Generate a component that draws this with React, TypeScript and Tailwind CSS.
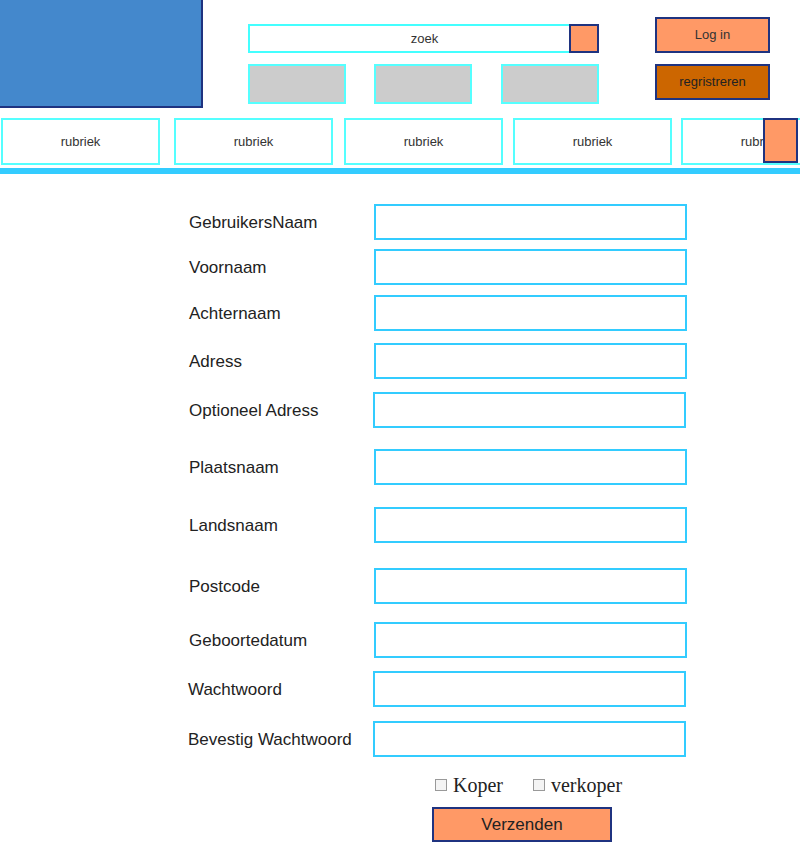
const fields: { label: string; mt: string; pl: string; lw: string }[] = [
  { label: 'GebruikersNaam', mt: 'mt-[30px]', pl: 'pl-[189px]', lw: 'w-[185px]' },
  { label: 'Voornaam', mt: 'mt-[9px]', pl: 'pl-[189px]', lw: 'w-[185px]' },
  { label: 'Achternaam', mt: 'mt-[10px]', pl: 'pl-[189px]', lw: 'w-[185px]' },
  { label: 'Adress', mt: 'mt-[12px]', pl: 'pl-[189px]', lw: 'w-[185px]' },
  { label: 'Optioneel Adress', mt: 'mt-[13px]', pl: 'pl-[189px]', lw: 'w-[184px]' },
  { label: 'Plaatsnaam', mt: 'mt-[21px]', pl: 'pl-[189px]', lw: 'w-[185px]' },
  { label: 'Landsnaam', mt: 'mt-[22px]', pl: 'pl-[189px]', lw: 'w-[185px]' },
  { label: 'Postcode', mt: 'mt-[25px]', pl: 'pl-[189px]', lw: 'w-[185px]' },
  { label: 'Geboortedatum', mt: 'mt-[18px]', pl: 'pl-[189px]', lw: 'w-[185px]' },
  { label: 'Wachtwoord', mt: 'mt-[13px]', pl: 'pl-[188px]', lw: 'w-[185px]' },
  { label: 'Bevestig Wachtwoord', mt: 'mt-[14px]', pl: 'pl-[188px]', lw: 'w-[185px]' },
];

const rubrieken = ['ml-[1px]', 'ml-[14px]', 'ml-[11px]', 'ml-[10px]', 'ml-[9px]'];

function Header() {
  return (
    <div className="relative">
      <div className="flex h-[118px]">
        <div className="w-[203px] h-[108px] bg-[#4488cc] border-r-2 border-b-2 border-[#1f3380] shrink-0" />
        <div className="ml-[45px] mt-[24px] flex flex-col">
          <div className="flex w-[351px] h-[29px]">
            <div className="flex-1 border-2 border-r-0 border-[#44ffff] flex items-center justify-center pl-[30px] text-[13px] text-[#333]">
              zoek
            </div>
            <button className="w-[30px] h-[29px] bg-[#ff9966] border-2 border-[#1f3380]" />
          </div>
          <div className="flex mt-[11px]">
            <div className="w-[98px] h-[40px] bg-[#cccccc] border-2 border-[#55ffff]" />
            <div className="w-[98px] h-[40px] bg-[#cccccc] border-2 border-[#55ffff] ml-[28px]" />
            <div className="w-[98px] h-[40px] bg-[#cccccc] border-2 border-[#55ffff] ml-[29px]" />
          </div>
        </div>
        <div className="ml-[56px] mt-[17px] flex flex-col">
          <button className="w-[115px] h-[36px] bg-[#ff9966] border-2 border-[#1f3380] text-[13px] text-[#333]">
            Log in
          </button>
          <button className="w-[115px] h-[36px] mt-[11px] bg-[#cc6600] border-2 border-[#1f3380] text-[13px] text-[#222]">
            regristreren
          </button>
        </div>
      </div>
      <div className="flex h-[47px] overflow-hidden">
        {rubrieken.map((ml, i) => (
          <div
            key={i}
            className={`${ml} w-[159px] shrink-0 border-2 border-[#55ffff] flex items-center justify-center text-[13px] text-[#333]`}
          >
            rubriek
          </div>
        ))}
      </div>
      {/* menu knop over de laatste rubriek */}
      <div className="absolute left-[763px] top-[118px] w-[35px] h-[45px] bg-[#ff9966] border-2 border-[#1f3380]" />
      <div className="h-[6px] mt-[3px] bg-[#33ccff]" />
    </div>
  );
}

export default function App() {
  return (
    <div className="w-[800px] h-[859px] overflow-hidden bg-white font-['Liberation_Sans',Arial,sans-serif]">
      <Header />
      <form className="flex flex-col">
        {fields.map((f) => (
          <div key={f.label} className={`flex items-center ${f.mt} ${f.pl}`}>
            <label className={`${f.lw} shrink-0 pt-[2px] text-[17px] text-[#222] whitespace-nowrap`}>
              {f.label}
            </label>
            <input
              type="text"
              className="w-[313px] h-[36px] border-2 border-[#33ccff] outline-none"
            />
          </div>
        ))}
        <div className="flex items-center pl-[435px] mt-[17px] h-[22px] font-['Liberation_Serif','Times_New_Roman',serif] text-[20px] text-[#222]">
          <span className="w-[12px] h-[12px] border border-[#999] bg-[#f4f4f4]" />
          <span className="ml-[6px]">Koper</span>
          <span className="ml-[30px] w-[12px] h-[12px] border border-[#999] bg-[#f4f4f4]" />
          <span className="ml-[6px]">verkoper</span>
        </div>
        <div className="pl-[432px] mt-[11px]">
          <button
            type="button"
            className="w-[180px] h-[35px] bg-[#ff9966] border-2 border-[#1f3380] text-[17px] text-[#222]"
          >
            Verzenden
          </button>
        </div>
      </form>
    </div>
  );
}
